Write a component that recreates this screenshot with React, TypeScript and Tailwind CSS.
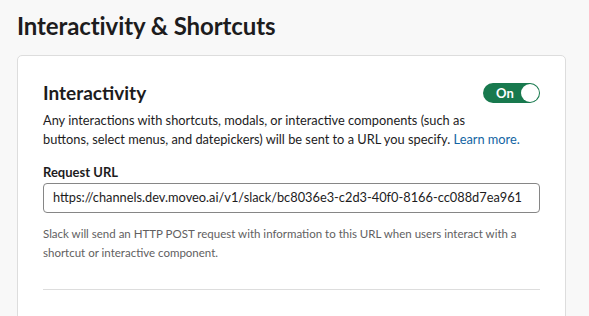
export default function App() {
  return (
    <div
      className="min-h-screen bg-[#f8f8f8] text-[#1d1c1d] overflow-hidden"
      style={{ fontFamily: 'Lato, "Liberation Sans", sans-serif' }}
    >
      <h1 className="pl-[17px] pt-[10px] text-[24px] leading-[32px] font-bold tracking-[-0.1px]">
        Interactivity &amp; Shortcuts
      </h1>

      <div className="ml-[17px] mt-[13px] w-[549px] rounded-[5px] border border-[#dddddd] bg-white px-[25px] pt-[25px] pb-[40px]">
        <div className="flex items-center justify-between">
          <h2 className="text-[19px] leading-[24px] font-bold">Interactivity</h2>
          <button className="flex h-[20px] w-[57px] items-center justify-between rounded-full bg-[#18794e] pl-[13px] pr-[1px]">
            <span className="text-[13px] font-bold leading-none text-white">On</span>
            <span className="h-[18px] w-[18px] rounded-full bg-white" />
          </button>
        </div>

        <p className="mt-[6px] text-[12.8px] leading-[19px]">
          Any interactions with shortcuts, modals, or interactive components (such as
          <br />
          buttons, select menus, and datepickers) will be sent to a URL you specify.{" "}
          <a className="text-[#1264a3]">Learn more.</a>
        </p>

        <label className="mt-[14px] block text-[13px] leading-[19px] font-bold">Request URL</label>
        <div className="mt-[1px] flex h-[30px] items-center whitespace-nowrap rounded-[4px] border border-[#868686] px-[9px] text-[12.8px]">
          https://channels.dev.moveo.ai/v1/slack/bc8036e3-c2d3-40f0-8166-cc088d7ea961
        </div>

        <p className="mt-[12px] text-[11.5px] leading-[18.5px] text-[#616061]">
          Slack will send an HTTP POST request with information to this URL when users interact with a
          shortcut or interactive component.
        </p>

        <div className="mt-[27px] border-t border-[#dddddd]" />
      </div>
    </div>
  );
}
